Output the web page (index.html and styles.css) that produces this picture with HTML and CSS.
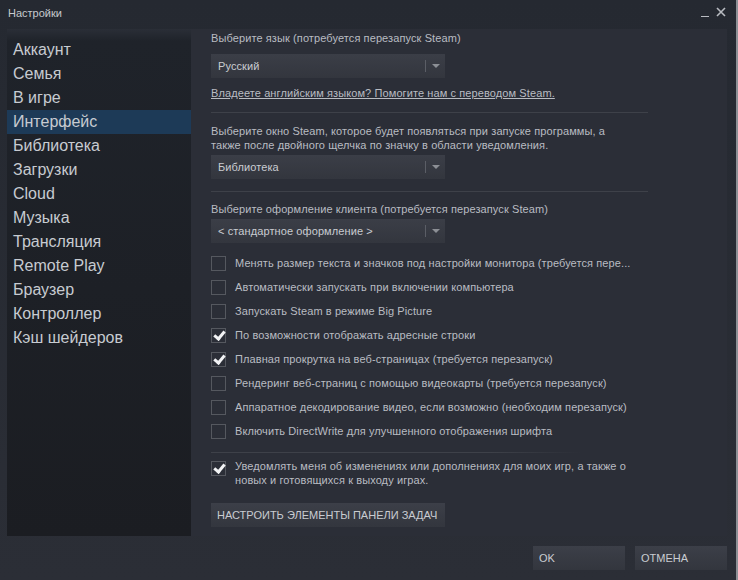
FILE: index.html
```
<!DOCTYPE html>
<html lang="ru">
<head>
  <meta charset="UTF-8" />
  <title>Настройки</title>
  <link rel="stylesheet" href="styles.css">
</head>
<body>
  <div class="titlebar">
    <span class="title">Настройки</span>
    <div class="win-controls">
      <span class="minimize"></span>
      <svg class="close" width="10" height="10" viewBox="0 0 10 10">
        <path d="M1 1 L9 9 M9 1 L1 9" stroke="#b9bcc2" stroke-width="1.6" fill="none" />
      </svg>
    </div>
  </div>

  <div class="main">
    <ul class="sidebar">
      <li>Аккаунт</li>
      <li>Семья</li>
      <li>В игре</li>
      <li class="active">Интерфейс</li>
      <li>Библиотека</li>
      <li>Загрузки</li>
      <li>Cloud</li>
      <li>Музыка</li>
      <li>Трансляция</li>
      <li>Remote Play</li>
      <li>Браузер</li>
      <li>Контроллер</li>
      <li>Кэш шейдеров</li>
    </ul>

    <div class="content">
      <div class="label first">Выберите язык (потребуется перезапуск Steam)</div>
      <div class="dropdown lang">
        <span>Русский</span>
        <span class="arrow"></span>
      </div>
      <a class="link" href="#">Владеете английским языком? Помогите нам с переводом Steam.</a>
      <div class="sep sep-1"></div>

      <div class="label second">Выберите окно Steam, которое будет появляться при запуске программы, а<br>также после двойного щелчка по значку в области уведомления.</div>
      <div class="dropdown">
        <span>Библиотека</span>
        <span class="arrow"></span>
      </div>
      <div class="sep sep-2"></div>

      <div class="label third">Выберите оформление клиента (потребуется перезапуск Steam)</div>
      <div class="dropdown">
        <span>&lt; стандартное оформление &gt;</span>
        <span class="arrow"></span>
      </div>

      <div class="checks">
        <label class="check"><span class="box"></span>Менять размер текста и значков под настройки монитора (требуется пере...</label>
        <label class="check"><span class="box"></span>Автоматически запускать при включении компьютера</label>
        <label class="check"><span class="box"></span>Запускать Steam в режиме Big Picture</label>
        <label class="check on"><span class="box"></span>По возможности отображать адресные строки</label>
        <label class="check on"><span class="box"></span>Плавная прокрутка на веб-страницах (требуется перезапуск)</label>
        <label class="check"><span class="box"></span>Рендеринг веб-страниц с помощью видеокарты (требуется перезапуск)</label>
        <label class="check"><span class="box"></span>Аппаратное декодирование видео, если возможно (необходим перезапуск)</label>
        <label class="check"><span class="box"></span>Включить DirectWrite для улучшенного отображения шрифта</label>
      </div>
      <div class="sep sep-3"></div>

      <label class="check notify on"><span class="box"></span><span>Уведомлять меня об изменениях или дополнениях для моих игр, а также о<br>новых и готовящихся к выходу играх.</span></label>

      <button class="btn taskbar">Настроить элементы панели задач</button>
    </div>
  </div>

  <div class="footer">
    <button class="btn">OK</button>
    <button class="btn">Отмена</button>
  </div>
</body>
</html>
```

FILE: styles.css
```
body {
  margin: 0;
  width: 736px;
  height: 580px;
  overflow: hidden;
  font-family: "Liberation Sans", Arial, sans-serif;
  font-size: 11px;
  color: #b9bcc2;
  background: linear-gradient(#252931, #2b2e36);
  border-right: 2px solid #8d9096;
}

.titlebar {
  height: 29px;
  display: flex;
  align-items: flex-start;
  justify-content: space-between;
}

.title {
  margin: 7px 0 0 8px;
  color: #c6c9ce;
  line-height: 13px;
}

.win-controls {
  display: flex;
  align-items: flex-start;
  gap: 7px;
  margin: 7px 10px 0 0;
}

.minimize {
  width: 8px;
  height: 1px;
  margin-top: 9px;
  background: #b9bcc2;
}

.main {
  display: flex;
  margin-left: 7px;
  height: 507px;
}

.sidebar {
  list-style: none;
  margin: 0;
  padding: 9px 0 0;
  width: 184px;
  background: linear-gradient(#2a2e37 0, #1f232a 12px, #1b1d22 100%);
  font-size: 16px;
  color: #c7cbd1;
}

.sidebar li {
  height: 24px;
  line-height: 24px;
  padding-left: 6px;
}

.sidebar li.active {
  background: #1d3a57;
}

.content {
  width: 516px;
  padding: 2px 0 0 20px;
  background: #2b2e37;
  display: flex;
  flex-direction: column;
  align-items: flex-start;
  letter-spacing: 0.1px;
}

.label {
  line-height: 14px;
}

.dropdown {
  width: 234px;
  height: 24px;
  box-sizing: border-box;
  padding-left: 7px;
  display: flex;
  align-items: center;
  justify-content: space-between;
  background: linear-gradient(#3b3e47, #33363e);
  color: #c9ccd1;
  margin-top: 3px;
}

.dropdown.lang {
  margin-top: 9px;
}

.arrow {
  width: 19px;
  height: 12px;
  border-left: 1px solid #5b5e66;
  position: relative;
}

.arrow::after {
  content: "";
  position: absolute;
  left: 6px;
  top: 4px;
  border-left: 4px solid transparent;
  border-right: 4px solid transparent;
  border-top: 4px solid #8c8f95;
}

.link {
  color: #b9bcc2;
  margin-top: 8px;
  line-height: 14px;
}

.sep {
  height: 1px;
  width: 437px;
  background: #3e4149;
}

.sep-1 {
  margin-top: 12px;
}

.label.second {
  margin-top: 11px;
}

.sep-2 {
  margin-top: 12px;
}

.label.third {
  margin-top: 10px;
}

.checks {
  margin-top: 8px;
}

.check {
  display: flex;
  align-items: center;
  height: 24px;
  gap: 9px;
}

.box {
  width: 13px;
  height: 13px;
  border: 1px solid #55585f;
  flex: none;
  position: relative;
}

.check.on .box::after {
  content: "";
  position: absolute;
  left: 4px;
  top: 0;
  width: 4px;
  height: 8px;
  border: solid #f2f3f5;
  border-width: 0 3px 3px 0;
  transform: rotate(40deg);
}

.sep-3 {
  margin-top: 9px;
  width: 370px;
  background: linear-gradient(to right, #3e4149 75%, rgba(62, 65, 73, 0));
}

.check.notify {
  height: auto;
  align-items: flex-start;
  margin-top: 6px;
  line-height: 14px;
}

.check.notify .box {
  margin-top: 2px;
}

.btn {
  font-family: "Liberation Sans", Arial, sans-serif;
  font-size: 11px;
  text-transform: uppercase;
  white-space: nowrap;
  color: #c9ccd1;
  background: linear-gradient(#3c3f48, #33363e);
  border: none;
  text-align: left;
  padding: 0 6px;
  height: 24px;
}

.btn.taskbar {
  width: 234px;
  margin-top: 16px;
}

.footer {
  display: flex;
  justify-content: flex-end;
  gap: 10px;
  padding: 10px 9px 0 0;
}

.footer .btn {
  width: 92px;
}
```
